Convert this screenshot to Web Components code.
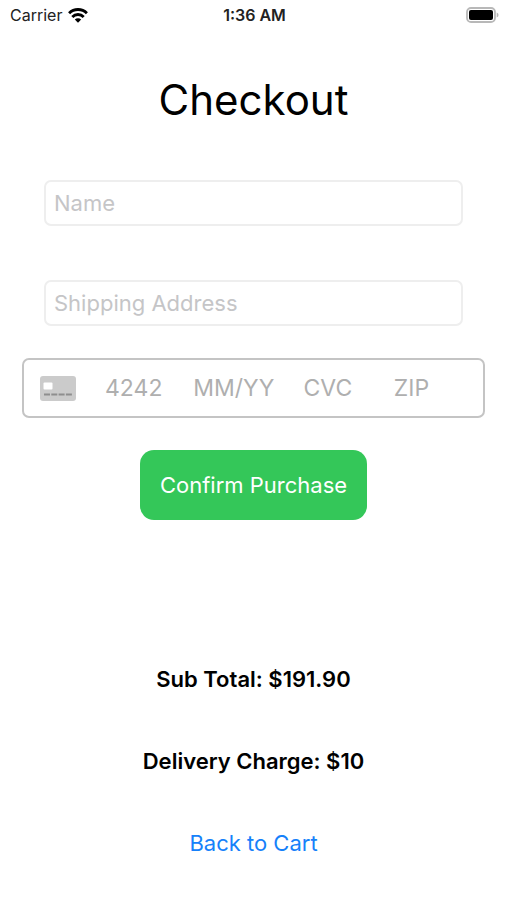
<!DOCTYPE html>
<html lang="en">
<head>
<meta charset="utf-8">
<meta name="viewport" content="width=device-width, initial-scale=1">
<title>Checkout</title>
<style>
  body { margin: 0; background: #fff; color: #000; font-family: Inter, "Liberation Sans", sans-serif; font-size: 22px; line-height: 28px; }
</style>
</head>
<body>
<checkout-page></checkout-page>
<script>
class BaseElement extends HTMLElement {
  constructor() {
    super();
    this.attachShadow({ mode: "open" }).innerHTML = this.template();
  }
}

customElements.define("status-bar", class extends BaseElement {
  template() {
    return `
      <style>
        :host { display: grid; grid-template-columns: 1fr auto 1fr; align-items: center; height: 30px; padding: 0 8px 0 10px; font-size: 16px; line-height: 20px; color: #222; }
        .carrier { display: flex; align-items: center; gap: 6px; }
        .time { font-weight: 600; }
        .battery { justify-self: end; }
        svg { display: block; }
      </style>
      <div class="carrier"><span>Carrier</span>
        <svg width="20" height="15" viewBox="0 0 20 15" fill="none" stroke="#000" stroke-width="2.9" aria-hidden="true">
          <path d="M1.1 5.2a12.7 12.7 0 0 1 17.8 0"/>
          <path d="M4.3 8.9a8 8 0 0 1 11.4 0"/>
          <path d="M10 14.8 6.8 11.6a4.5 4.5 0 0 1 6.4 0z" fill="#000" stroke="none"/>
        </svg>
      </div>
      <span class="time">1:36 AM</span>
      <svg class="battery" width="33" height="16" viewBox="0 0 33 16" aria-hidden="true">
        <rect x="1" y="1" width="28" height="14" rx="4" fill="#fff" stroke="#b8b8b8" stroke-width="1.8"/>
        <rect x="3" y="3" width="24" height="10" rx="2" fill="#000"/>
        <path d="M30.7 5.5a2.6 2.6 0 0 1 0 5z" fill="#b8b8b8"/>
      </svg>`;
  }
});

customElements.define("text-field", class extends BaseElement {
  template() {
    const label = this.getAttribute("label");
    return `
      <style>
        :host { display: block; }
        input { display: block; width: 100%; height: 46px; box-sizing: border-box; margin: 0; padding: 0 8px; border: 2px solid #eee; border-radius: 7px; background: #fff; font: inherit; color: #000; outline: 0; }
        input::placeholder { color: #c5c5c7; opacity: 1; }
      </style>
      <input type="text" placeholder="${label}" aria-label="${label}">`;
  }
});

customElements.define("card-field", class extends BaseElement {
  template() {
    return `
      <style>
        :host { display: grid; grid-template-columns: 66px 88fr 110fr 90fr 74fr; align-items: center; box-sizing: border-box; height: 60px; padding: 0 15px; border: 2px solid #c4c4c4; border-radius: 7px; }
        svg { display: block; }
        input { width: 100%; min-width: 0; box-sizing: border-box; margin: 0; padding: 0; border: 0; background: none; font: inherit; font-size: 23px; color: #000; outline: 0; }
        input::placeholder { color: #afafaf; opacity: 1; }
      </style>
      <svg width="38" height="25" viewBox="0 0 38 25" aria-hidden="true">
        <rect x="1" width="36" height="25" rx="3" fill="#cbcbcb"/>
        <rect x="4.5" y="6.5" width="9" height="7" rx="1" fill="#fff"/>
        <path d="M5 18.5h6m1.3 0h6m1.3 0h6m1.3 0h6" stroke="#8e8e8e" stroke-width="2"/>
      </svg>
      <input type="text" inputmode="numeric" placeholder="4242" aria-label="Card number">
      <input type="text" inputmode="numeric" placeholder="MM/YY" aria-label="Expiration date">
      <input type="text" inputmode="numeric" placeholder="CVC" aria-label="CVC">
      <input type="text" placeholder="ZIP" aria-label="ZIP">`;
  }
});

customElements.define("confirm-button", class extends BaseElement {
  template() {
    return `
      <style>
        :host { display: block; }
        button { display: block; margin: 0; padding: 21px 20px; border: 0; border-radius: 14px; background: #34c759; color: #fff; font: inherit; }
      </style>
      <button type="button"><slot></slot></button>`;
  }
});

customElements.define("order-line", class extends BaseElement {
  template() {
    return `
      <style>:host { display: block; font-weight: 600; }</style>
      <slot></slot>`;
  }
});

customElements.define("text-link", class extends BaseElement {
  template() {
    return `
      <style>
        :host { display: block; }
        a { color: #1681fa; text-decoration: none; }
      </style>
      <a href="#cart"><slot></slot></a>`;
  }
});

customElements.define("checkout-page", class extends BaseElement {
  template() {
    return `
      <style>
        :host { display: block; }
        main { display: flex; flex-direction: column; align-items: center; }
        h1 { margin: 42px 0 52px; font-size: 42px; line-height: 56px; font-weight: 400; }
        form { align-self: stretch; display: flex; flex-direction: column; align-items: center; margin: 0 22px; }
        .fields { align-self: stretch; display: grid; gap: 54px; margin: 0 22px 32px; }
        card-field { align-self: stretch; margin-bottom: 32px; }
        .summary { display: grid; justify-items: center; gap: 54px; margin: 145px 0 32px; }
      </style>
      <status-bar></status-bar>
      <main>
        <h1>Checkout</h1>
        <form>
          <div class="fields">
            <text-field label="Name"></text-field>
            <text-field label="Shipping Address"></text-field>
          </div>
          <card-field></card-field>
          <confirm-button>Confirm Purchase</confirm-button>
        </form>
        <div class="summary">
          <order-line>Sub Total: $191.90</order-line>
          <order-line>Delivery Charge: $10</order-line>
          <text-link>Back to Cart</text-link>
        </div>
      </main>`;
  }
});
</script>
</body>
</html>
